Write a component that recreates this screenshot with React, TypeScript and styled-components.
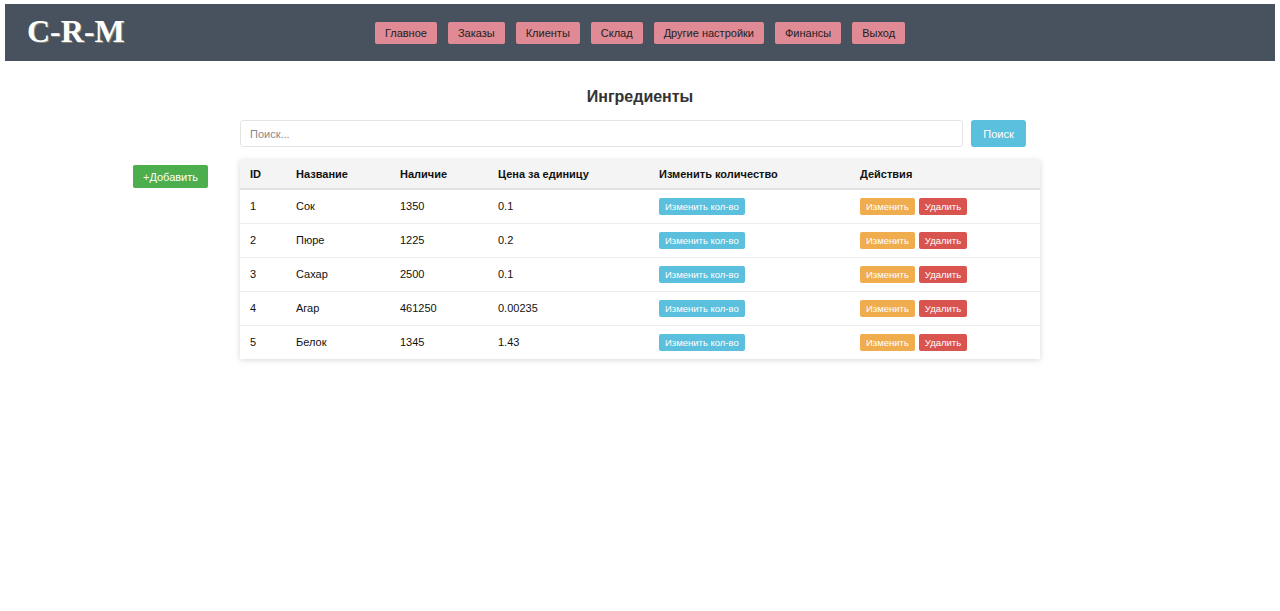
import React from "react";
import styled, { createGlobalStyle } from "styled-components";

const Global = createGlobalStyle`
  html, body { margin: 0; padding: 0; background: #fff; }
  body { font-family: "Liberation Sans", Arial, sans-serif; color: #333; }
  * { box-sizing: border-box; }
`;

const Page = styled.div`
  padding: 4px 5px 0 5px;
`;

const Header = styled.header`
  height: 57px;
  background: #47525e;
  display: grid;
  grid-template-columns: 1fr auto 1fr;
  align-items: center;
  padding: 0 22px;
`;

const Logo = styled.div`
  font-family: "Liberation Serif", "Times New Roman", serif;
  font-weight: bold;
  font-size: 32px;
  color: #fff;
  text-shadow: 1px 1px 0 rgba(255, 230, 160, 0.35);
  margin-top: -3px;
`;

const Nav = styled.nav`
  display: flex;
  gap: 11px;
`;

const NavButton = styled.button`
  height: 22px;
  padding: 0 10px;
  border: none;
  border-radius: 2px;
  background: #df8a95;
  color: #222;
  font-family: "Liberation Sans", Arial, sans-serif;
  font-size: 11px;
  cursor: pointer;
`;

const Main = styled.main`
  display: flex;
  flex-direction: column;
  align-items: center;
  padding-top: 26px;
  padding-bottom: 40px;
`;

const Title = styled.h2`
  margin: 0;
  font-size: 16px;
  font-weight: bold;
  color: #333;
  line-height: 20px;
`;

const SearchRow = styled.div`
  width: 800px;
  display: flex;
  gap: 8px;
  margin-top: 13px;
`;

const SearchInput = styled.input`
  width: 723px;
  height: 27px;
  border: 1px solid #e4e4e4;
  border-radius: 3px;
  padding: 0 9px;
  font-family: "Liberation Sans", Arial, sans-serif;
  font-size: 11px;
  color: #333;
  &::placeholder { color: #888; }
  outline: none;
`;

const SearchButton = styled.button`
  width: 55px;
  height: 27px;
  border: none;
  border-radius: 3px;
  background: #5bc0de;
  color: #fff;
  font-family: "Liberation Sans", Arial, sans-serif;
  font-size: 11px;
`;

const TableRow = styled.div`
  width: 100%;
  display: grid;
  grid-template-columns: 1fr 800px 1fr;
  column-gap: 32px;
  margin-top: 13px;
  align-items: start;
`;

const AddCell = styled.div`
  display: flex;
  justify-content: flex-end;
  padding-top: 5px;
`;

const AddButton = styled.button`
  width: 75px;
  height: 23px;
  border: none;
  border-radius: 2px;
  background: #4cae4c;
  color: #fff;
  font-family: "Liberation Sans", Arial, sans-serif;
  font-size: 11px;
`;

const TableCard = styled.div`
  width: 800px;
  background: #fff;
  box-shadow: 0 1px 6px rgba(0, 0, 0, 0.16);
`;

const Table = styled.table`
  width: 100%;
  border-collapse: collapse;
  font-size: 11px;
  color: #111;
`;

const Th = styled.th`
  text-align: left;
  font-weight: bold;
  background: #f4f4f4;
  height: 29px;
  padding: 0 10px;
  border-bottom: 2px solid #e2e2e2;
`;

const Td = styled.td`
  height: 34px;
  padding: 0 10px;
  border-bottom: 1px solid #eee;
  tr:last-child & { border-bottom: none; }
`;

const SmallButton = styled.button<{ $bg: string }>`
  height: 17px;
  padding: 0 6px;
  border: none;
  border-radius: 2px;
  background: ${(p) => p.$bg};
  color: #fff;
  font-family: "Liberation Sans", Arial, sans-serif;
  font-size: 9.5px;
  margin-right: 4px;
  vertical-align: middle;
`;

const navItems = ["Главное", "Заказы", "Клиенты", "Склад", "Другие настройки", "Финансы", "Выход"];

const rows = [
  { id: 1, name: "Сок", qty: "1350", price: "0.1" },
  { id: 2, name: "Пюре", qty: "1225", price: "0.2" },
  { id: 3, name: "Сахар", qty: "2500", price: "0.1" },
  { id: 4, name: "Агар", qty: "461250", price: "0.00235" },
  { id: 5, name: "Белок", qty: "1345", price: "1.43" },
];

export default function App() {
  return (
    <Page>
      <Global />
      <Header>
        <Logo>C-R-M</Logo>
        <Nav>
          {navItems.map((n) => (
            <NavButton key={n}>{n}</NavButton>
          ))}
        </Nav>
        <div />
      </Header>
      <Main>
        <Title>Ингредиенты</Title>
        <SearchRow>
          <SearchInput placeholder="Поиск..." />
          <SearchButton>Поиск</SearchButton>
        </SearchRow>
        <TableRow>
          <AddCell>
            <AddButton>+Добавить</AddButton>
          </AddCell>
          <TableCard>
            <Table>
              <thead>
                <tr>
                  <Th style={{ width: 46 }}>ID</Th>
                  <Th style={{ width: 104 }}>Название</Th>
                  <Th style={{ width: 98 }}>Наличие</Th>
                  <Th style={{ width: 161 }}>Цена за единицу</Th>
                  <Th style={{ width: 201 }}>Изменить количество</Th>
                  <Th>Действия</Th>
                </tr>
              </thead>
              <tbody>
                {rows.map((r) => (
                  <tr key={r.id}>
                    <Td>{r.id}</Td>
                    <Td>{r.name}</Td>
                    <Td>{r.qty}</Td>
                    <Td>{r.price}</Td>
                    <Td>
                      <SmallButton $bg="#5bc0de">Изменить кол-во</SmallButton>
                    </Td>
                    <Td>
                      <SmallButton $bg="#f0ad4e">Изменить</SmallButton>
                      <SmallButton $bg="#d9534f">Удалить</SmallButton>
                    </Td>
                  </tr>
                ))}
              </tbody>
            </Table>
          </TableCard>
          <div />
        </TableRow>
      </Main>
    </Page>
  );
}
